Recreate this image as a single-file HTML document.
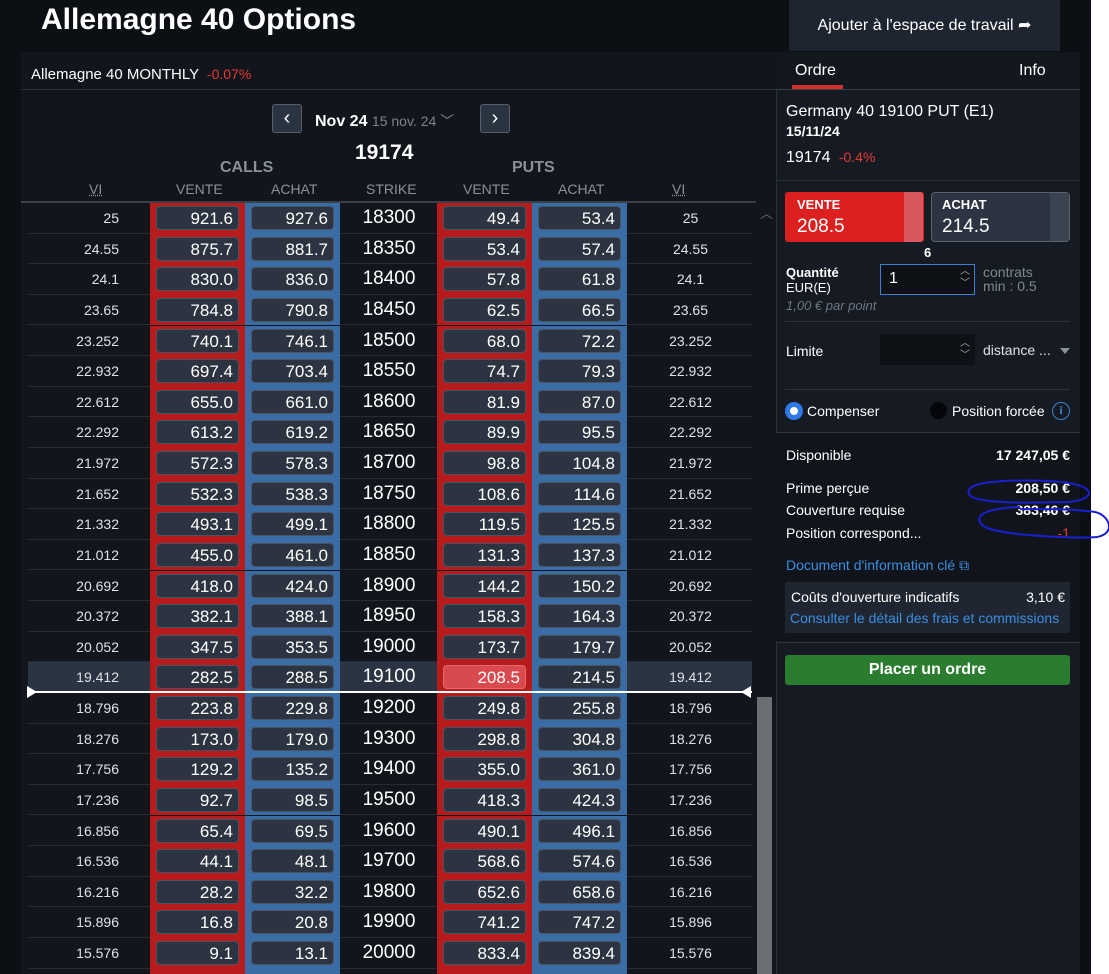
<!DOCTYPE html>
<html style="overflow:hidden;width:1109px;height:974px"><head><meta charset="utf-8"><style>
*{margin:0;padding:0;box-sizing:border-box}
body{width:1109px;height:974px;overflow:hidden;background:#fff;font-family:"Liberation Sans",Arial,sans-serif;color:#e8eaed;position:relative}
.a{position:absolute}
#bg{left:0;top:0;width:1091px;height:974px;background:#0c0f14}
#panel{left:21px;top:52px;width:755px;height:922px;background:#12161c}
#rp{left:776px;top:52px;width:304px;height:922px;background:#161b23}
.r{position:absolute;left:28px;width:724px;height:30.6px;border-bottom:1px solid #262c35}
.r div{position:absolute;top:0;height:30.6px;line-height:30.6px;font-size:16px}
.v1{left:0;width:91px;text-align:right;font-size:14px!important;color:#dfe2e6}
.cs{left:122px;width:95px;background:#b71b1b}
.cb{left:217px;width:95px;background:#3a6da6}
.ps{left:409px;width:95px;background:#b71b1b}
.pb{left:504px;width:95px;background:#3a6da6}
.k{left:313px;width:96px;text-align:center;font-size:19px!important;color:#fff}
.v2{left:600px;width:125px;text-align:center;font-size:14px!important;color:#dfe2e6}
.r div span{position:absolute;left:6px;right:6px;top:3px;height:24px;line-height:24px;background:#2c3441;border:1px solid #4a5362;border-radius:4px;text-align:right;padding-right:5px;font-size:17px;color:#fff}
.hl{background:#2a3442}
.hdr{font-size:14px;color:#8a919b;top:181px}
</style></head><body>
<div class="a" id="bg"></div>
<div class="a" style="left:41px;top:3px;font-size:30px;font-weight:bold;color:#fff">Allemagne 40 Options</div>
<div class="a" style="left:789px;top:0;width:271px;height:51px;background:#1e2530;font-size:16px;color:#fff;line-height:52px;text-align:center">Ajouter à l'espace de travail ➦</div>
<div class="a" id="panel"></div>
<div class="a" style="left:31px;top:66px;font-size:15px;color:#fff">Allemagne 40 MONTHLY <span style="color:#e53935;font-size:14px">&nbsp;-0.07%</span></div>
<div class="a" style="left:21px;top:89px;width:755px;height:1px;background:#2a3038"></div>
<div class="a" style="left:272px;top:104px;width:30px;height:29px;background:#2a3441;border:1px solid #55606e;border-radius:3px;color:#fff;text-align:center;line-height:26px;font-size:20px">‹</div>
<div class="a" style="left:315px;top:111px;font-size:16px;font-weight:bold;color:#fff">Nov 24 <span style="font-weight:normal;color:#7c838d;font-size:14px">15 nov. 24 ﹀</span></div>
<div class="a" style="left:480px;top:104px;width:30px;height:29px;background:#2a3441;border:1px solid #55606e;border-radius:3px;color:#fff;text-align:center;line-height:26px;font-size:20px">›</div>
<div class="a" style="left:355px;top:141px;font-size:21px;font-weight:bold;color:#fff">19174</div>
<div class="a" style="left:220px;top:159px;font-size:16px;font-weight:bold;color:#8a919b">CALLS</div>
<div class="a" style="left:512px;top:159px;font-size:16px;font-weight:bold;color:#8a919b">PUTS</div>
<div class="a hdr" style="left:89px;text-decoration:underline dotted">VI</div>
<div class="a hdr" style="left:176px">VENTE</div>
<div class="a hdr" style="left:271px">ACHAT</div>
<div class="a hdr" style="left:366px">STRIKE</div>
<div class="a hdr" style="left:463px">VENTE</div>
<div class="a hdr" style="left:558px">ACHAT</div>
<div class="a hdr" style="left:672px;text-decoration:underline dotted">VI</div>
<div class="a" style="left:21px;top:201px;width:735px;height:2px;background:#3a4048"></div>
<div class="a" style="left:760px;top:203px;font-size:13px;color:#6b727c">︿</div>
<div class="a" style="left:757px;top:697px;width:15px;height:277px;background:#6b6e73"></div>

<div class="r" style="top:203px"><div class="v1">25</div><div class="cs"><span>921.6</span></div><div class="cb"><span>927.6</span></div><div class="k">18300</div><div class="ps"><span>49.4</span></div><div class="pb"><span>53.4</span></div><div class="v2">25</div></div>
<div class="r" style="top:233.6px"><div class="v1">24.55</div><div class="cs"><span>875.7</span></div><div class="cb"><span>881.7</span></div><div class="k">18350</div><div class="ps"><span>53.4</span></div><div class="pb"><span>57.4</span></div><div class="v2">24.55</div></div>
<div class="r" style="top:264.3px"><div class="v1">24.1</div><div class="cs"><span>830.0</span></div><div class="cb"><span>836.0</span></div><div class="k">18400</div><div class="ps"><span>57.8</span></div><div class="pb"><span>61.8</span></div><div class="v2">24.1</div></div>
<div class="r" style="top:294.9px"><div class="v1">23.65</div><div class="cs"><span>784.8</span></div><div class="cb"><span>790.8</span></div><div class="k">18450</div><div class="ps"><span>62.5</span></div><div class="pb"><span>66.5</span></div><div class="v2">23.65</div></div>
<div class="r" style="top:325.5px"><div class="v1">23.252</div><div class="cs"><span>740.1</span></div><div class="cb"><span>746.1</span></div><div class="k">18500</div><div class="ps"><span>68.0</span></div><div class="pb"><span>72.2</span></div><div class="v2">23.252</div></div>
<div class="r" style="top:356.1px"><div class="v1">22.932</div><div class="cs"><span>697.4</span></div><div class="cb"><span>703.4</span></div><div class="k">18550</div><div class="ps"><span>74.7</span></div><div class="pb"><span>79.3</span></div><div class="v2">22.932</div></div>
<div class="r" style="top:386.8px"><div class="v1">22.612</div><div class="cs"><span>655.0</span></div><div class="cb"><span>661.0</span></div><div class="k">18600</div><div class="ps"><span>81.9</span></div><div class="pb"><span>87.0</span></div><div class="v2">22.612</div></div>
<div class="r" style="top:417.4px"><div class="v1">22.292</div><div class="cs"><span>613.2</span></div><div class="cb"><span>619.2</span></div><div class="k">18650</div><div class="ps"><span>89.9</span></div><div class="pb"><span>95.5</span></div><div class="v2">22.292</div></div>
<div class="r" style="top:448px"><div class="v1">21.972</div><div class="cs"><span>572.3</span></div><div class="cb"><span>578.3</span></div><div class="k">18700</div><div class="ps"><span>98.8</span></div><div class="pb"><span>104.8</span></div><div class="v2">21.972</div></div>
<div class="r" style="top:478.6px"><div class="v1">21.652</div><div class="cs"><span>532.3</span></div><div class="cb"><span>538.3</span></div><div class="k">18750</div><div class="ps"><span>108.6</span></div><div class="pb"><span>114.6</span></div><div class="v2">21.652</div></div>
<div class="r" style="top:509.3px"><div class="v1">21.332</div><div class="cs"><span>493.1</span></div><div class="cb"><span>499.1</span></div><div class="k">18800</div><div class="ps"><span>119.5</span></div><div class="pb"><span>125.5</span></div><div class="v2">21.332</div></div>
<div class="r" style="top:539.9px"><div class="v1">21.012</div><div class="cs"><span>455.0</span></div><div class="cb"><span>461.0</span></div><div class="k">18850</div><div class="ps"><span>131.3</span></div><div class="pb"><span>137.3</span></div><div class="v2">21.012</div></div>
<div class="r" style="top:570.5px"><div class="v1">20.692</div><div class="cs"><span>418.0</span></div><div class="cb"><span>424.0</span></div><div class="k">18900</div><div class="ps"><span>144.2</span></div><div class="pb"><span>150.2</span></div><div class="v2">20.692</div></div>
<div class="r" style="top:601.1px"><div class="v1">20.372</div><div class="cs"><span>382.1</span></div><div class="cb"><span>388.1</span></div><div class="k">18950</div><div class="ps"><span>158.3</span></div><div class="pb"><span>164.3</span></div><div class="v2">20.372</div></div>
<div class="r" style="top:631.8px"><div class="v1">20.052</div><div class="cs"><span>347.5</span></div><div class="cb"><span>353.5</span></div><div class="k">19000</div><div class="ps"><span>173.7</span></div><div class="pb"><span>179.7</span></div><div class="v2">20.052</div></div>
<div class="r hl" style="top:662.4px"><div class="v1">19.412</div><div class="cs"><span>282.5</span></div><div class="cb"><span>288.5</span></div><div class="k">19100</div><div class="ps"><span style="background:#d94a4e;border-color:#e2686b">208.5</span></div><div class="pb"><span>214.5</span></div><div class="v2">19.412</div></div>
<div class="r" style="top:693px"><div class="v1">18.796</div><div class="cs"><span>223.8</span></div><div class="cb"><span>229.8</span></div><div class="k">19200</div><div class="ps"><span>249.8</span></div><div class="pb"><span>255.8</span></div><div class="v2">18.796</div></div>
<div class="r" style="top:723.6px"><div class="v1">18.276</div><div class="cs"><span>173.0</span></div><div class="cb"><span>179.0</span></div><div class="k">19300</div><div class="ps"><span>298.8</span></div><div class="pb"><span>304.8</span></div><div class="v2">18.276</div></div>
<div class="r" style="top:754.3px"><div class="v1">17.756</div><div class="cs"><span>129.2</span></div><div class="cb"><span>135.2</span></div><div class="k">19400</div><div class="ps"><span>355.0</span></div><div class="pb"><span>361.0</span></div><div class="v2">17.756</div></div>
<div class="r" style="top:784.9px"><div class="v1">17.236</div><div class="cs"><span>92.7</span></div><div class="cb"><span>98.5</span></div><div class="k">19500</div><div class="ps"><span>418.3</span></div><div class="pb"><span>424.3</span></div><div class="v2">17.236</div></div>
<div class="r" style="top:815.5px"><div class="v1">16.856</div><div class="cs"><span>65.4</span></div><div class="cb"><span>69.5</span></div><div class="k">19600</div><div class="ps"><span>490.1</span></div><div class="pb"><span>496.1</span></div><div class="v2">16.856</div></div>
<div class="r" style="top:846.1px"><div class="v1">16.536</div><div class="cs"><span>44.1</span></div><div class="cb"><span>48.1</span></div><div class="k">19700</div><div class="ps"><span>568.6</span></div><div class="pb"><span>574.6</span></div><div class="v2">16.536</div></div>
<div class="r" style="top:876.8px"><div class="v1">16.216</div><div class="cs"><span>28.2</span></div><div class="cb"><span>32.2</span></div><div class="k">19800</div><div class="ps"><span>652.6</span></div><div class="pb"><span>658.6</span></div><div class="v2">16.216</div></div>
<div class="r" style="top:907.4px"><div class="v1">15.896</div><div class="cs"><span>16.8</span></div><div class="cb"><span>20.8</span></div><div class="k">19900</div><div class="ps"><span>741.2</span></div><div class="pb"><span>747.2</span></div><div class="v2">15.896</div></div>
<div class="r" style="top:938px"><div class="v1">15.576</div><div class="cs"><span>9.1</span></div><div class="cb"><span>13.1</span></div><div class="k">20000</div><div class="ps"><span>833.4</span></div><div class="pb"><span>839.4</span></div><div class="v2">15.576</div></div>
<div class="a" style="left:150px;top:969px;width:95px;height:5px;background:#b71b1b"></div>
<div class="a" style="left:245px;top:969px;width:95px;height:5px;background:#3a6da6"></div>
<div class="a" style="left:437px;top:969px;width:95px;height:5px;background:#b71b1b"></div>
<div class="a" style="left:532px;top:969px;width:95px;height:5px;background:#3a6da6"></div>

<div class="a" style="left:27px;top:691px;width:725px;height:2px;background:#fff"></div>
<div class="a" style="left:27px;top:686px;width:0;height:0;border-top:6px solid transparent;border-bottom:6px solid transparent;border-left:10px solid #fff"></div>
<div class="a" style="left:741px;top:686px;width:0;height:0;border-top:6px solid transparent;border-bottom:6px solid transparent;border-right:10px solid #fff"></div>

<div class="a" id="rp"></div>
<div class="a" style="left:776px;top:52px;width:304px;height:38px;background:#13171e"></div>
<div class="a" style="left:795px;top:62px;font-size:16px;color:#fff">Ordre</div>
<div class="a" style="left:792px;top:85px;width:51px;height:4px;background:#d32f2f"></div>
<div class="a" style="left:1019px;top:62px;font-size:16px;color:#fff">Info</div>
<div class="a" style="left:776px;top:89px;width:304px;height:1px;background:#3a4048"></div>
<div class="a" style="left:776px;top:90px;width:1px;height:884px;background:#2a3038"></div>
<div class="a" style="left:786px;top:103px;font-size:16px;color:#fff">Germany 40 19100 PUT (E1)</div>
<div class="a" style="left:786px;top:123px;font-size:14px;color:#fff;font-weight:bold">15/11/24</div>
<div class="a" style="left:786px;top:149px;font-size:16px;color:#fff">19174 <span style="color:#e53935;font-size:14px">&nbsp;-0.4%</span></div>
<div class="a" style="left:776px;top:180px;width:304px;height:1px;background:#2a3038"></div>
<div class="a" style="left:785px;top:192px;width:139px;height:50px;background:#dc1f1f;border-radius:3px"></div>
<div class="a" style="left:904px;top:192px;width:19px;height:50px;background:#d9585e;border-radius:0 3px 3px 0"></div>
<div class="a" style="left:797px;top:197px;font-size:13px;font-weight:bold;color:#fff">VENTE</div>
<div class="a" style="left:797px;top:216px;font-size:19px;color:#fff">208.5</div>
<div class="a" style="left:931px;top:192px;width:139px;height:50px;background:#2c3441;border:1px solid #5a6370;border-radius:4px"></div>
<div class="a" style="left:1050px;top:193px;width:19px;height:48px;background:#3a4350"></div>
<div class="a" style="left:942px;top:197px;font-size:13px;font-weight:bold;color:#fff">ACHAT</div>
<div class="a" style="left:942px;top:216px;font-size:19px;color:#fff">214.5</div>
<div class="a" style="left:924px;top:245px;font-size:13px;font-weight:bold;color:#fff">6</div>
<div class="a" style="left:786px;top:265px;font-size:13px;line-height:15px;color:#fff"><b>Quantité</b><br>EUR(E)</div>
<div class="a" style="left:786px;top:298px;font-size:13px;font-style:italic;color:#6f7680">1,00 € par point</div>
<div class="a" style="left:880px;top:264px;width:95px;height:31px;background:#0e1116;border:1px solid #3b82d6"></div>
<div class="a" style="left:889px;top:270px;font-size:16px;color:#fff">1</div>
<div class="a" style="left:960px;top:266px;font-size:10px;color:#aaa;line-height:12px">︿<br>﹀</div>
<div class="a" style="left:983px;top:265px;font-size:14px;line-height:14px;color:#7f868f">contrats<br>min : 0.5</div>
<div class="a" style="left:785px;top:321px;width:285px;height:1px;background:#2e343c"></div>
<div class="a" style="left:786px;top:343px;font-size:14px;color:#fff">Limite</div>
<div class="a" style="left:880px;top:334px;width:95px;height:31px;background:#0e1116"></div>
<div class="a" style="left:960px;top:338px;font-size:10px;color:#aaa;line-height:12px">︿<br>﹀</div>
<div class="a" style="left:983px;top:342px;font-size:14px;color:#dfe2e6">distance ...</div>
<div class="a" style="left:1060px;top:348px;border-left:5px solid transparent;border-right:5px solid transparent;border-top:6px solid #8a919b"></div>
<div class="a" style="left:785px;top:389px;width:285px;height:1px;background:#2e343c"></div>
<div class="a" style="left:785px;top:402px;width:18px;height:18px;border-radius:50%;background:#2e7ae6"></div>
<div class="a" style="left:790px;top:407px;width:8px;height:8px;border-radius:50%;background:#fff"></div>
<div class="a" style="left:807px;top:403px;font-size:14px;color:#fff">Compenser</div>
<div class="a" style="left:930px;top:402px;width:17px;height:17px;border-radius:50%;background:#05070a"></div>
<div class="a" style="left:952px;top:403px;font-size:14px;color:#fff">Position forcée</div>
<div class="a" style="left:1052px;top:402px;width:18px;height:18px;border-radius:50%;border:1.5px solid #3b82d6;color:#3b82d6;font-size:12px;text-align:center;line-height:15px;font-weight:bold;font-family:'Liberation Serif',serif">i</div>
<div class="a" style="left:776px;top:432px;width:304px;height:1px;background:#2e343c"></div>
<div class="a" style="left:776px;top:433px;width:304px;height:208px;background:#11151b"></div>
<div class="a" style="left:786px;top:447px;font-size:14px;color:#fff">Disponible</div>
<div class="a" style="left:900px;top:447px;width:170px;text-align:right;font-size:14px;color:#fff;font-weight:bold">17 247,05 €</div>
<div class="a" style="left:786px;top:480px;font-size:14px;color:#fff">Prime perçue</div>
<div class="a" style="left:900px;top:480px;width:170px;text-align:right;font-size:14px;color:#fff;font-weight:bold">208,50 €</div>
<div class="a" style="left:786px;top:502px;font-size:14px;color:#fff">Couverture requise</div>
<div class="a" style="left:900px;top:502px;width:170px;text-align:right;font-size:14px;color:#fff;font-weight:bold">383,46 €</div>
<div class="a" style="left:786px;top:525px;font-size:14px;color:#fff">Position correspond...</div>
<div class="a" style="left:900px;top:525px;width:170px;text-align:right;font-size:14px;color:#e53935">-1</div>
<svg class="a" style="left:960px;top:470px" width="149" height="75"><path d="M45 11C28 12 5 14 9 24c4 10 60 9 100 8 18-2 25-8 16-14C112 10 70 10 40 11" fill="none" stroke="#1a1fd0" stroke-width="2"/><path d="M60 37C30 38 12 44 22 55c10 10 90 14 115 12 20-4 12-22-2-25-20-3-50-3-75-3" fill="none" stroke="#1a1fd0" stroke-width="2"/></svg>
<div class="a" style="left:786px;top:557px;font-size:14px;color:#3b8ee0">Document d'information clé ⧉</div>
<div class="a" style="left:785px;top:582px;width:285px;height:51px;background:#1f2631"></div>
<div class="a" style="left:791px;top:589px;font-size:14px;color:#fff">Coûts d'ouverture indicatifs</div>
<div class="a" style="left:960px;top:589px;width:105px;text-align:right;font-size:14px;color:#fff">3,10 €</div>
<div class="a" style="left:790px;top:610px;font-size:14px;color:#3b8ee0">Consulter le détail des frais et commissions</div>
<div class="a" style="left:776px;top:642px;width:304px;height:1px;background:#2e343c"></div>
<div class="a" style="left:785px;top:655px;width:285px;height:30px;background:#2a7d2e;border-radius:3px;text-align:center;line-height:30px;font-size:16px;font-weight:bold;color:#fff">Placer un ordre</div>
</body></html>
